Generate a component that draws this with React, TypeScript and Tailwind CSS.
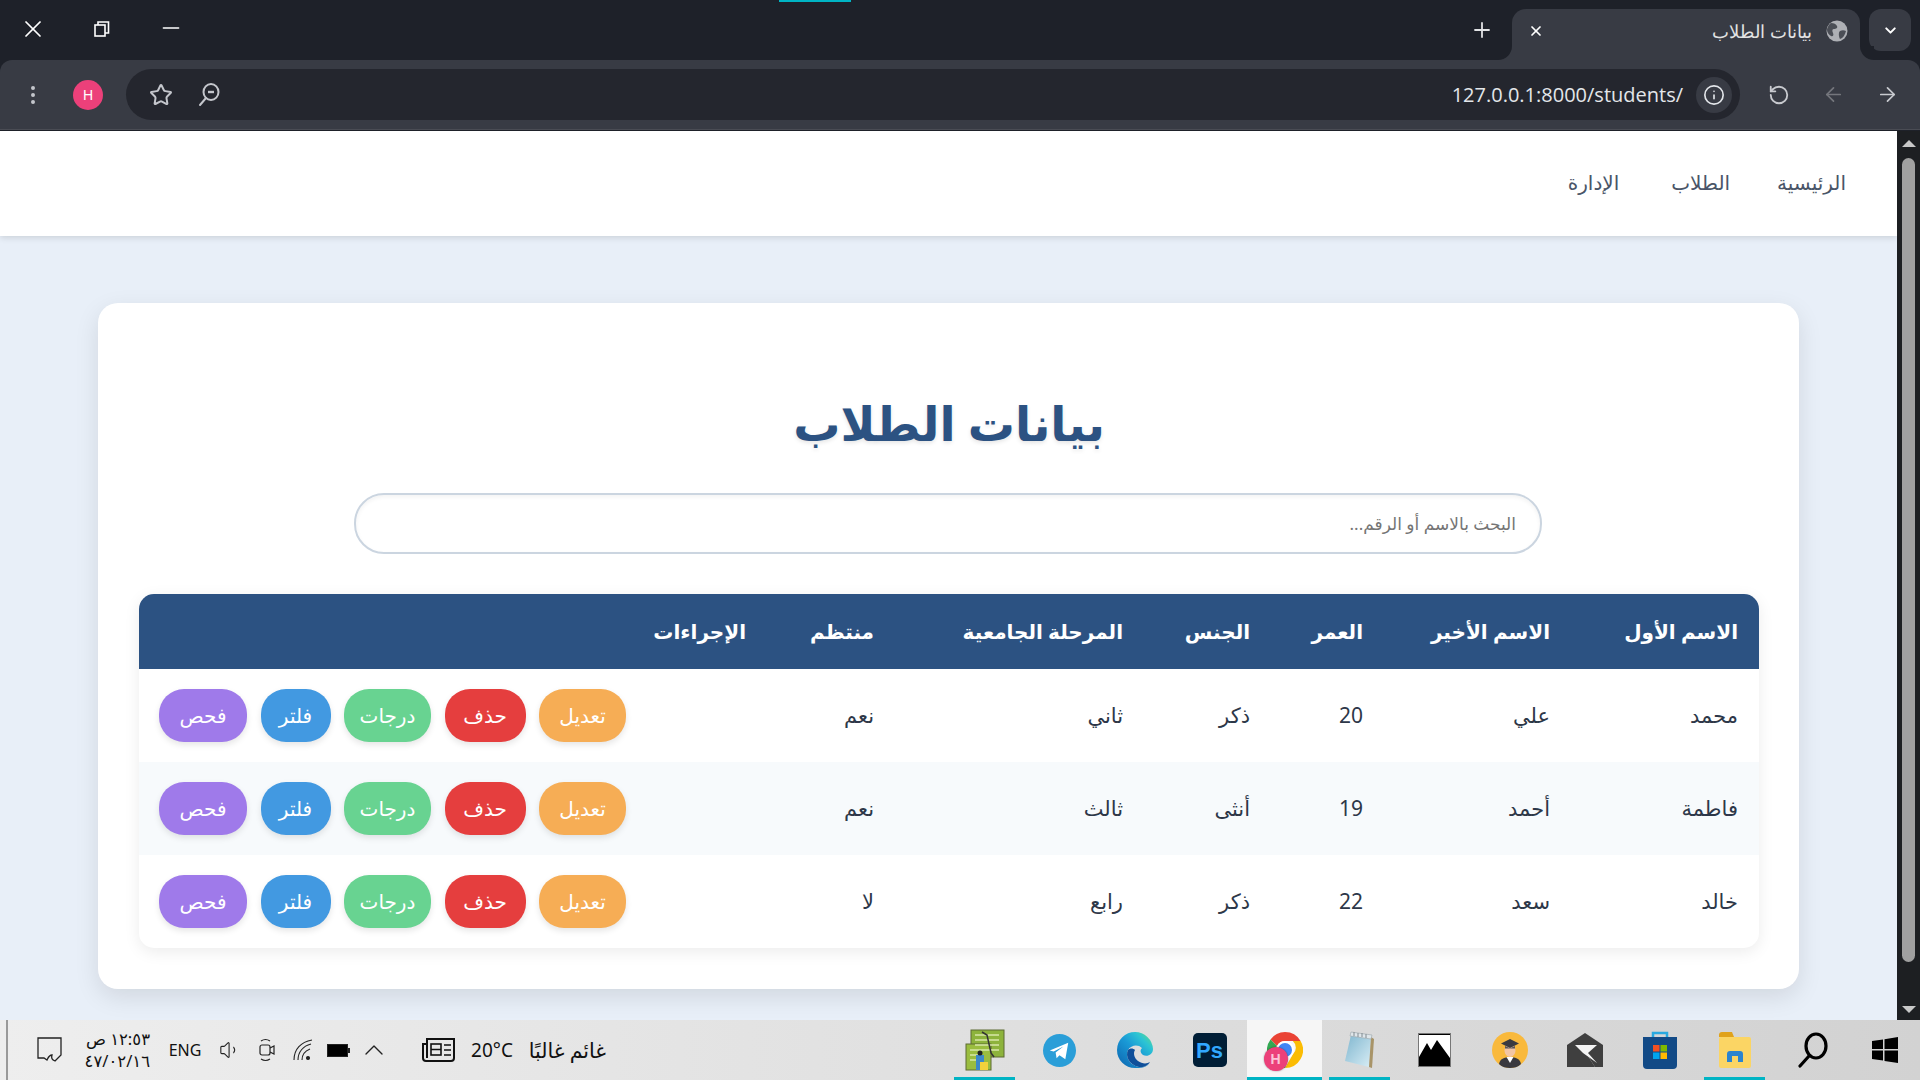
import React from "react";
import { ArrowLeft, ArrowRight, ChevronDown, ChevronUp, EllipsisVertical, Info, Minus, Plus, RotateCcw, Star, Volume1, X } from "lucide-react";

const students = [
  { first: "محمد", last: "علي", age: 20, gender: "ذكر", stage: "ثاني", regular: "نعم" },
  { first: "فاطمة", last: "أحمد", age: 19, gender: "أنثى", stage: "ثالث", regular: "نعم" },
  { first: "خالد", last: "سعد", age: 22, gender: "ذكر", stage: "رابع", regular: "لا" },
];

const actions = [
  { label: "تعديل", cls: "bg-[#f6ad55] w-[87px]" },
  { label: "حذف", cls: "bg-[#e53e3e] w-[81px]" },
  { label: "درجات", cls: "bg-[#68d391] w-[87px]" },
  { label: "فلتر", cls: "bg-[#4299e1] w-[70px]" },
  { label: "فحص", cls: "bg-[#9f7aea] w-[88px]" },
];

const headers = [
  { label: "الاسم الأول", cls: "w-[188px]" },
  { label: "الاسم الأخير", cls: "w-[187px]" },
  { label: "العمر", cls: "w-[113px]" },
  { label: "الجنس", cls: "w-[127px]" },
  { label: "المرحلة الجامعية", cls: "w-[249px]" },
  { label: "منتظم", cls: "w-[128px]" },
  { label: "الإجراءات", cls: "" },
];

// Window restore icon of the frame
const RestoreIcon = () => (
  <svg width="16" height="16" viewBox="0 0 16 16" fill="none" stroke="white" strokeWidth="1.6">
    <rect x="1" y="4" width="10" height="11" />
    <path d="M4 4V1h10.5v11H11" />
  </svg>
);

const GlobeIcon = () => (
  <svg width="22" height="22" viewBox="0 0 22 22">
    <circle cx="11" cy="11" r="10.5" fill="#aeb0b5" />
    <path d="M5 3c3 0 5 1 6 3s-1 3-3 3-2 2-1 4 0 4-2 3-4-4-4-6 2-6 4-7zM14 11c2-1 4-1 6 0-1 4-3 7-6 8-1-2-2-6 0-8z" fill="#4b4e56" />
  </svg>
);

// Magnifier with the handle towards the lower left, minus inside the lens
const ZoomIcon = () => (
  <svg width="22" height="24" viewBox="0 0 22 24" fill="none" stroke="#c4c6cc" strokeWidth="2">
    <ellipse cx="13" cy="9" rx="7.500" ry="8" />
    <path d="M8 15l-6 7" strokeLinecap="round" />
    <path d="M10 9h6" strokeWidth="2.400" />
  </svg>
);

const Tray = ({ children, cls }: { children: React.ReactNode; cls: string }) => (
  <div className={`flex items-center justify-center shrink-0 ${cls}`}>{children}</div>
);

// Taskbar app icons, drawn by hand
const NotesApp = () => (
  <svg width="40" height="42" viewBox="0 0 40 42">
    <rect x="6" y="1" width="33" height="27" fill="#8db33c" stroke="#5d6b33" />
    <rect x="1" y="15" width="25" height="26" fill="#9abd3f" stroke="#5d6b33" />
    <path d="M10 6h24M10 11h24M10 16h24M10 21h24M5 21h17M5 26h8M5 31h6" stroke="#d7e7a8" strokeWidth="1.5" />
    <path d="M17 3l5 3 4 18 3 4" stroke="#333" strokeWidth="1.5" fill="none" />
    <rect x="11" y="26" width="8" height="15" fill="#3c88c8" />
    <rect x="15" y="33" width="8" height="8" fill="#f2d23c" />
    <circle cx="15" cy="24" r="2.5" fill="#222" />
  </svg>
);

const TelegramApp = () => (
  <svg width="33" height="33" viewBox="0 0 34 34">
    <circle cx="17" cy="17" r="17" fill="#2a9ed8" />
    <path d="M7 17l19-8-3 17-6-4-3 3-1-6 8-6-10 5z" fill="white" />
  </svg>
);

const EdgeApp = () => (
  <svg width="36" height="36" viewBox="0 0 36 36">
    <defs>
      <linearGradient id="edgeBody" x1="0" y1="1" x2="1" y2="0">
        <stop offset="0" stopColor="#0d62ad" />
        <stop offset="0.5" stopColor="#1a9ad6" />
        <stop offset="0.75" stopColor="#2cc4d4" />
        <stop offset="1" stopColor="#6ae07a" />
      </linearGradient>
    </defs>
    <path d="M18 0A18 18 0 0 1 36 17C36 23 30 25 26 23C23 21 23 18 25 16C21 12 14 13 11 18C8 24 12 33 22 35C27 36 31 33 33 30C30 36 24 36 18 36A18 18 0 0 1 18 0z" fill="url(#edgeBody)" />
    <path d="M11 18C8 24 12 33 22 35C27 36 31 33 33 30C30 32 25 32 21 29C17 26 16 21 18 18C16 16 13 16 11 18z" fill="#0f4f9a" />
  </svg>
);

const PhotoshopApp = () => (
  <div className="w-[34px] h-[34px] rounded-[5px] bg-[#001e36] flex items-center justify-center text-[#31a8ff] text-[22px] font-bold font-['Liberation_Sans',sans-serif]">
    Ps
  </div>
);

const ChromeApp = () => (
  <div className="relative w-[36px] h-[36px]">
    <svg width="36" height="36" viewBox="0 0 36 36">
      <path d="M18 0a18 18 0 0 1 15.6 9H18a9 9 0 0 0-8 5L3.5 7.5A18 18 0 0 1 18 0z" fill="#ea4335" />
      <path d="M33.6 9A18 18 0 0 1 18 36l7.8-13.5A9 9 0 0 0 25.8 9z" fill="#fbbc04" />
      <path d="M3.5 7.5L10 14a9 9 0 0 0 8 13.5h3L18 36A18 18 0 0 1 3.500 7.500z" fill="#34a853" />
      <circle cx="18" cy="18" r="9" fill="white" />
      <circle cx="18" cy="18" r="7" fill="#4285f4" />
    </svg>
    <div className="absolute left-[-3px] top-[15px] w-[24px] h-[24px] rounded-full bg-[#ec407a] text-[#fbc4d8] text-[14px] font-bold flex items-center justify-center shadow-[0_0_2px_rgba(0,0,0,0.4)] font-['Liberation_Sans',sans-serif]">
      H
    </div>
  </div>
);

const NotepadApp = () => (
  <svg width="34" height="38" viewBox="0 0 34 38">
    <defs>
      <linearGradient id="padFace" x1="0" y1="0" x2="1" y2="1">
        <stop offset="0" stopColor="#7fb6cf" />
        <stop offset="1" stopColor="#d8edf5" />
      </linearGradient>
    </defs>
    <path d="M8 4l20 2-2 30L2 30z" fill="url(#padFace)" />
    <path d="M26 36l2-30 3 2-2 29z" fill="#a89468" />
    <path d="M8 1l21 3-1 4-21-3z" fill="#dfe6ea" stroke="#98a4aa" strokeWidth="0.6" />
    <path d="M11 1v4M15 2v4M19 2v4M23 3v4" stroke="#808a90" strokeWidth="1" />
  </svg>
);

const PhotosApp = () => (
  <svg width="33" height="34" viewBox="0 0 33 34">
    <rect x="0.500" y="0.500" width="32" height="33" fill="#000" stroke="#777" />
    <rect x="1" y="2" width="31" height="3" fill="#fff" />
    <path d="M1 24l8-14 4 7 6-10 13 18v-21H1z" fill="#fff" />
  </svg>
);

const StudentApp = () => (
  <svg width="36" height="36" viewBox="0 0 36 36">
    <circle cx="18" cy="18" r="18" fill="#f9b93c" />
    <path d="M7 32c1-5 5-7 11-7s10 2 11 7c-3 3-7 4-11 4s-8-1-11-4z" fill="#39393f" />
    <path d="M14.500 25h7L18 31z" fill="#fff" />
    <ellipse cx="18" cy="18.500" rx="5.500" ry="6.500" fill="#f3c6a4" />
    <path d="M9 11.500L18 7l9 4.500-9 4.500z" fill="#3b3b40" />
    <path d="M13 14v2.500h10V14l-5 2.200z" fill="#55555c" />
  </svg>
);

const MailApp = () => (
  <svg width="36" height="34" viewBox="0 0 36 34">
    <path d="M0 12L18 0l18 12v4H0z" fill="#3f3f3f" />
    <path d="M0 12h28l-9 8 9 14H0z" fill="#3f3f3f" />
    <path d="M28 12h8v22h-8L19 20z" fill="#3f3f3f" />
    <path d="M8 12h22l-9 8 9 10-14-10z" fill="#f4f4f4" />
  </svg>
);

const StoreApp = () => (
  <svg width="34" height="38" viewBox="0 0 34 38">
    <path d="M10 6V2h14v4" fill="none" stroke="#29a9e0" strokeWidth="2.5" />
    <path d="M0 6h34v28a4 4 0 0 1-4 4H4a4 4 0 0 1-4-4z" fill="#124a86" />
    <rect x="10" y="14" width="6.500" height="6.500" fill="#f25022" />
    <rect x="17.500" y="14" width="6.500" height="6.500" fill="#7fba00" />
    <rect x="10" y="21.500" width="6.500" height="6.500" fill="#00a4ef" />
    <rect x="17.500" y="21.500" width="6.500" height="6.500" fill="#ffb900" />
  </svg>
);

const ExplorerApp = () => (
  <svg width="32" height="36" viewBox="0 0 32 36">
    <path d="M0 3a3 3 0 0 1 3-3h10l2 5H0z" fill="#e0a21b" />
    <rect x="0" y="5" width="32" height="31" rx="2" fill="#fbd564" />
    <path d="M8 30V22a3 3 0 0 1 3-3h10a3 3 0 0 1 3 3v8h-5v-6h-6v6z" fill="#2b84cf" />
  </svg>
);

const SearchApp = () => (
  <svg className="ml-[6px]" width="32" height="36" viewBox="0 0 32 36" fill="none" stroke="#000" strokeWidth="3.200">
    <ellipse cx="19" cy="14" rx="10" ry="12" />
    <path d="M12 24L3 34" strokeLinecap="round" />
  </svg>
);

const WindowsApp = () => (
  <svg width="26" height="26" viewBox="0 0 26 26" fill="#000">
    <path d="M0 4l11-1.500V12H0zM12.500 2.300L26 0v12H12.500zM0 13.500h11v10L0 22zM12.500 13.500H26V26l-13.500-2z" />
  </svg>
);

const taskbarApps = [
  { id: "notes", icon: <NotesApp />, line: true },
  { id: "telegram", icon: <TelegramApp /> },
  { id: "edge", icon: <EdgeApp /> },
  { id: "ps", icon: <PhotoshopApp /> },
  { id: "chrome", icon: <ChromeApp />, active: true, line: true },
  { id: "notepad", icon: <NotepadApp />, line: true },
  { id: "photos", icon: <PhotosApp /> },
  { id: "student", icon: <StudentApp /> },
  { id: "mail", icon: <MailApp /> },
  { id: "store", icon: <StoreApp /> },
  { id: "explorer", icon: <ExplorerApp />, line: true },
  { id: "search", icon: <SearchApp /> },
  { id: "windows", icon: <WindowsApp /> },
];

const BrowserChrome = () => (
  <div dir="ltr" className="shrink-0 h-[131px] bg-[#1e2129] relative">
    {/* Loading tab group marker */}
    <div className="absolute left-[779px] top-0 w-[72px] h-[2px] bg-[#00b4c4]" />
    <div className="h-[60px] flex items-start">
      <Tray cls="w-[34px] h-[34px] ml-[16px] mt-[12px]">
        <X size={28} color="white" strokeWidth={1.5} />
      </Tray>
      <Tray cls="w-[34px] h-[34px] ml-[35px] mt-[12px]">
        <RestoreIcon />
      </Tray>
      <Tray cls="w-[34px] h-[34px] ml-[35px] mt-[11px]">
        <Minus size={26} color="white" strokeWidth={1.5} />
      </Tray>
      <Tray cls="w-[34px] h-[34px] ml-[1277px] mt-[13px]">
        <Plus size={24} color="#e2e3e5" strokeWidth={1.8} />
      </Tray>
      <div className="relative ml-[13px] mt-[9px] w-[348px] h-[51px] bg-[#383b44] rounded-t-[14px] flex items-center justify-between pl-[16px] pr-[12px] pb-[7px]">
        {/* Curved feet where the tab meets the toolbar */}
        <div className="absolute right-full bottom-0 w-[14px] h-[14px] bg-[#383b44]">
          <div className="w-full h-full bg-[#1e2129] rounded-br-[14px]" />
        </div>
        <div className="absolute left-full bottom-0 w-[14px] h-[14px] bg-[#383b44]">
          <div className="w-full h-full bg-[#1e2129] rounded-bl-[14px]" />
        </div>
        <X size={16} color="white" strokeWidth={2.6} />
        <div className="flex items-center gap-[14px]">
          <span className="text-[#e3e3e3] text-[18px]" dir="rtl">بيانات الطلاب</span>
          <GlobeIcon />
        </div>
      </div>
      <Tray cls="ml-[9px] mt-[9px] w-[42px] h-[42px] bg-[#383b44] rounded-[12px]">
        <ChevronDown size={17} color="white" strokeWidth={2.8} />
      </Tray>
    </div>
    <div className="h-[70px] bg-[#383b44] rounded-t-[12px] border-b border-[#4a4c54] flex items-start">
      <Tray cls="w-[24px] h-[30px] ml-[21px] mt-[20px]">
        <EllipsisVertical size={28} color="#c4c6cc" strokeWidth={2} />
      </Tray>
      <Tray cls="w-[30px] h-[30px] ml-[28px] mt-[20px] rounded-full bg-[#ec407a] text-white text-[14px] font-['Liberation_Sans',sans-serif]">
        H
      </Tray>
      <div className="ml-[23px] mt-[9px] w-[1614px] h-[51px] bg-[#24262e] rounded-full flex items-center pl-[23px] pr-[8px]">
        <Star size={24} color="#c4c6cc" strokeWidth={2} />
        <div className="ml-[25px]">
          <ZoomIcon />
        </div>
        <span className="ml-auto text-[#e3e6ea] text-[20px] font-['Open_Sans',sans-serif]">127.0.0.1:8000/students/</span>
        <Tray cls="w-[36px] h-[36px] ml-[13px] rounded-full bg-[#383b44]">
          <Info size={22} color="#e3e6ea" strokeWidth={1.8} />
        </Tray>
      </div>
      <RotateCcw size={22} color="#c8cacf" strokeWidth={2} className="ml-[28px] mt-[24px]" />
      <ArrowLeft size={23} color="#74767c" strokeWidth={1.8} className="ml-[32px] mt-[23px]" />
      <ArrowRight size={23} color="#c8cacf" strokeWidth={1.8} className="ml-[31px] mt-[23px]" />
    </div>
  </div>
);

const StudentsPage = () => (
  <div dir="rtl" className="flex-1 min-w-0 bg-[#e8eff8] font-['Noto_Sans','DejaVu_Sans',sans-serif]">
    <nav className="h-[105px] bg-white shadow-[0_2px_6px_rgba(0,0,0,0.12)] flex items-center gap-[47px] pr-[51px] text-[20px] text-[#4a5568] pb-[1px]">
      <a>الرئيسية</a>
      <a>الطلاب</a>
      <a className="mr-[5px]">الإدارة</a>
    </nav>
    <main className="mx-[98px] mt-[67px] h-[686px] bg-white rounded-[20px] pt-[41px] pr-[40px] pl-[41px] shadow-[0_8px_24px_rgba(0,0,0,0.1)]">
      <h1 className="mt-[43px] mb-[34px] h-[72px] leading-[72px] text-center text-[47px] font-bold text-[#2c5282] [text-shadow:0_2px_4px_rgba(0,0,0,0.1)]">
        بيانات الطلاب
      </h1>
      <input
        placeholder="البحث بالاسم أو الرقم..."
        className="block mr-[217px] w-[1188px] h-[61px] rounded-[30px] border-2 border-[#cbd5e0] px-[24px] text-[17px] outline-none placeholder:text-[#757575] shadow-[inset_0_2px_4px_rgba(0,0,0,0.05)]"
      />
      <div className="mt-[40px] w-[1620px] rounded-[15px] overflow-hidden shadow-[0_4px_16px_rgba(0,0,0,0.08)]">
        <table className="w-[1620px] table-fixed border-collapse">
          <thead>
            <tr className="bg-[#2c5282] text-white">
              {headers.map((h) => (
                <th key={h.label} className={`h-[75px] px-[21px] text-right text-[20px] font-bold ${h.cls}`}>
                  {h.label}
                </th>
              ))}
            </tr>
          </thead>
          <tbody>
            {students.map((s) => (
              <tr key={s.first} className="h-[93px] even:bg-[#f7fafc] text-[#2d3748] text-[21px]">
                <td className="px-[21px]">{s.first}</td>
                <td className="px-[21px]">{s.last}</td>
                <td className="px-[21px]">{s.age}</td>
                <td className="px-[21px]">{s.gender}</td>
                <td className="px-[21px]">{s.stage}</td>
                <td className="px-[21px]">{s.regular}</td>
                <td className="pr-[21px] pl-[20px]">
                  <div className="flex justify-end gap-[13.5px]">
                    {actions.map((a) => (
                      <button
                        key={a.label}
                        className={`h-[53px] rounded-[25px] text-white text-[20px] shadow-[0_3px_6px_rgba(0,0,0,0.1)] ${a.cls}`}
                      >
                        {a.label}
                      </button>
                    ))}
                  </div>
                </td>
              </tr>
            ))}
          </tbody>
        </table>
      </div>
    </main>
  </div>
);

const Scrollbar = () => (
  <div className="w-[23px] shrink-0 bg-[#1d1f22] flex flex-col items-center pt-[9px] pb-[7px]">
    <div className="w-0 h-0 border-x-[7px] border-x-transparent border-b-[7px] border-b-[#c8c8c8]" />
    <div className="w-[13px] h-[804px] mt-[11px] rounded-full bg-[#a0a0a0]" />
    <div className="mt-auto w-0 h-0 border-x-[7px] border-x-transparent border-t-[7px] border-t-[#c8c8c8]" />
  </div>
);

const Taskbar = () => (
  <div dir="ltr" className="shrink-0 h-[60px] bg-gradient-to-r from-[#eeeeee] to-[#d2d2d2] flex items-stretch text-[#111] font-['Noto_Sans','DejaVu_Sans',sans-serif]">
    <div className="w-[2px] ml-[6px] bg-[#9a9a9a]" />
    <Tray cls="ml-[29px] w-[25px]">
      <svg width="25" height="26" viewBox="0 0 25 26" fill="none" stroke="#222" strokeWidth="1.3">
        <path d="M1 1h23v17l-6 6c-3-1-4-3-3-6-3 0-4 3-5 5l-3-2H1z" />
      </svg>
    </Tray>
    <div dir="rtl" className="ml-[24px] w-[64px] flex flex-col justify-center text-[16.5px] leading-[22px] text-right whitespace-nowrap">
      <span>١٢:٥٣ ص</span>
      <span>٤٧/٠٢/١٦</span>
    </div>
    <Tray cls="ml-[18px] w-[34px] text-[16px]">ENG</Tray>
    <Tray cls="ml-[17px] w-[22px]">
      <Volume1 size={22} color="#222" strokeWidth={1.2} />
    </Tray>
    <Tray cls="ml-[18px] w-[16px]">
      <svg width="16" height="26" viewBox="0 0 16 26" fill="none" stroke="#222" strokeWidth="1.2">
        <rect x="1" y="8" width="10" height="10" rx="2" />
        <path d="M11 11l4-2v8l-4-2M2 4c3-2 6-2 9 0M2 22c3 2 6 2 9 0" />
      </svg>
    </Tray>
    <Tray cls="ml-[18px] w-[20px]">
      <svg width="20" height="22" viewBox="0 0 20 22" fill="none" stroke="#222" strokeWidth="1.100">
        <path d="M1 21C1 10 8 3 19 1M5 21C5 13 10 7 18 5M9 21c0-5 3-9 8-11" />
        <circle cx="15" cy="19" r="1.500" fill="#222" />
      </svg>
    </Tray>
    <Tray cls="ml-[14px] w-[23px]">
      <div className="w-[21px] h-[13px] border border-[#222] bg-black" />
      <div className="w-[2px] h-[5px] bg-[#222]" />
    </Tray>
    <Tray cls="ml-[15px] w-[18px]">
      <ChevronUp size={32} color="#222" strokeWidth={1} className="shrink-0" />
    </Tray>
    <Tray cls="ml-[39px] w-[36px]">
      <svg width="36" height="24" viewBox="0 0 36 24" fill="none" stroke="#111" strokeWidth="2">
        <path d="M5 1h27v19a3 3 0 0 1-3 3H4a3 3 0 0 1-3-3V6h4zM5 6v14" />
        <rect x="9" y="6" width="10" height="11" strokeWidth="1.6" />
        <path d="M9 11.500h10M22 7h7M22 12h7M22 17h7" strokeWidth="1.600" />
      </svg>
    </Tray>
    <Tray cls="ml-[12px] w-[44px] text-[19px]">20°C</Tray>
    <div dir="rtl" className="ml-[13px] w-[79px] flex items-center text-[20.500px] whitespace-nowrap">غائم غالبًا</div>
    <div className="ml-auto flex mr-[-2px]">
      {taskbarApps.map((app) => (
        <div key={app.id} className={`relative w-[75px] flex items-center justify-center ${app.active ? "bg-[#f6f6f6]" : ""}`}>
          {app.icon}
          {app.line && <div className={`absolute bottom-0 h-[3px] bg-[#00b4c4] ${app.active ? "inset-x-0" : "inset-x-[7px]"}`} />}
        </div>
      ))}
    </div>
  </div>
);

const App: React.FC = () => {
  return (
    <div className="h-screen w-full flex flex-col overflow-hidden">
      <BrowserChrome />
      <div className="flex-1 min-h-0 flex">
        <StudentsPage />
        <Scrollbar />
      </div>
      <Taskbar />
    </div>
  );
};

export default App;
